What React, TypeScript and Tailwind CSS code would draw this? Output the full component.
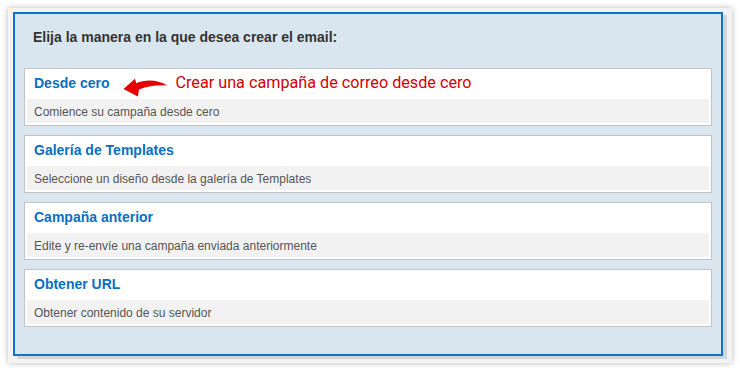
const options = [
    {
        title: 'Desde cero',
        desc: 'Comience su campaña desde cero',
        note: 'Crear una campaña de correo desde cero',
    },
    {
        title: 'Galería de Templates',
        desc: 'Seleccione un diseño desde la galería de Templates',
    },
    {
        title: 'Campaña anterior',
        desc: 'Edite y re-envíe una campaña enviada anteriormente',
    },
    {
        title: 'Obtener URL',
        desc: 'Obtener contenido de su servidor',
    },
];

function CurvedArrow() {
    return (
        <svg width="46" height="22" viewBox="0 0 46 22" className="shrink-0">
            <path
                d="M0.5 14 L12 3.8 L13.2 8.2 C 22 4.6, 34 4.2, 44.5 10.5 C 35 9.8, 25 11, 16 14.6 L 14.8 21.6 Z"
                fill="#e60000"
            />
        </svg>
    );
}

export default function App() {
    return (
        <div className="min-h-screen bg-white p-2 font-['Liberation_Sans',Arial,sans-serif]">
            <div className="h-[355px] w-[724px] bg-[#f3f3f3] pt-[4px] pl-[5px] shadow-[0_0_6px_rgba(0,0,0,0.28)]">
                <div className="h-[344px] w-[710px] border-2 border-[#0b74d0] bg-[#dae6ef] shadow-[4px_3px_0_#d5d5d5]">
                    <div className="flex h-[46px] items-center px-[18px] text-[14px] leading-[20px] font-bold text-[#333333]">
                        Elija la manera en la que desea crear el email:
                    </div>
                    <div className="flex flex-col gap-[9px] px-[9px] pt-[8px]">
                        {options.map((opt) => (
                            <div
                                key={opt.title}
                                className="border border-[#c4c4c4] bg-white p-[2px]"
                            >
                                <div className="flex h-[28px] items-center px-[7px] pb-[5px]">
                                    <span className="text-[14px] leading-[20px] font-bold text-[#0a6fc3]">
                                        {opt.title}
                                    </span>
                                    {opt.note && (
                                        <>
                                            <span className="mt-[6px] ml-[14px] flex">
                                                <CurvedArrow />
                                            </span>
                                            <span className="ml-[6px] font-['Roboto',sans-serif] text-[16.2px] leading-[20px] text-[#d40000]">
                                                {opt.note}
                                            </span>
                                        </>
                                    )}
                                </div>
                                <div className="flex h-[24px] items-center bg-[#f2f2f2] px-[7px] pt-px text-[12px] leading-[16px] text-[#555555]">
                                    {opt.desc}
                                </div>
                            </div>
                        ))}
                    </div>
                </div>
            </div>
        </div>
    );
}
